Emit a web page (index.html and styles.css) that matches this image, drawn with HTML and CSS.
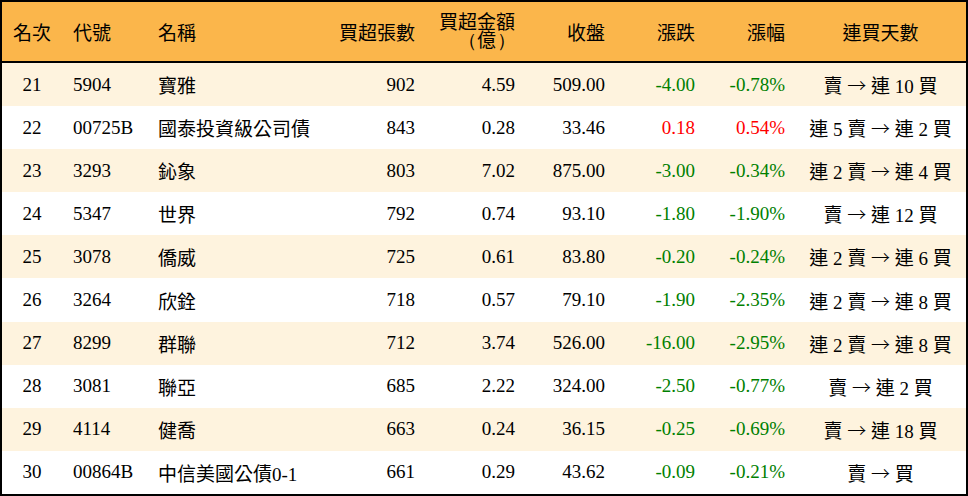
FILE: index.html
```html
<!DOCTYPE html>
<html lang="zh-Hant">
<head>
<meta charset="utf-8">
<title>買超排行</title>
<link rel="stylesheet" href="styles.css">
</head>
<body>
<div class="board">
  <div class="row head">
    <div class="c center">名次</div>
    <div class="c left code">代號</div>
    <div class="c left">名稱</div>
    <div class="c right">買超張數</div>
    <div class="c right two"><span class="ln">買超金額</span><span class="ln"><span class="paren pl">（</span>億<span class="paren pr">）</span></span></div>
    <div class="c right">收盤</div>
    <div class="c right">漲跌</div>
    <div class="c right">漲幅</div>
    <div class="c center">連買天數</div>
  </div>

  <div class="row odd">
    <div class="c center">21</div><div class="c left code">5904</div><div class="c left">寶雅</div>
    <div class="c right">902</div><div class="c right">4.59</div><div class="c right">509.00</div>
    <div class="c right down">-4.00</div><div class="c right down">-0.78%</div><div class="c center">賣 <span class="arr">→</span> 連 10 買</div>
  </div>
  <div class="row">
    <div class="c center">22</div><div class="c left code">00725B</div><div class="c left">國泰投資級公司債</div>
    <div class="c right">843</div><div class="c right">0.28</div><div class="c right">33.46</div>
    <div class="c right up">0.18</div><div class="c right up">0.54%</div><div class="c center">連 5 賣 <span class="arr">→</span> 連 2 買</div>
  </div>
  <div class="row odd">
    <div class="c center">23</div><div class="c left code">3293</div><div class="c left">鈊象</div>
    <div class="c right">803</div><div class="c right">7.02</div><div class="c right">875.00</div>
    <div class="c right down">-3.00</div><div class="c right down">-0.34%</div><div class="c center">連 2 賣 <span class="arr">→</span> 連 4 買</div>
  </div>
  <div class="row">
    <div class="c center">24</div><div class="c left code">5347</div><div class="c left">世界</div>
    <div class="c right">792</div><div class="c right">0.74</div><div class="c right">93.10</div>
    <div class="c right down">-1.80</div><div class="c right down">-1.90%</div><div class="c center">賣 <span class="arr">→</span> 連 12 買</div>
  </div>
  <div class="row odd">
    <div class="c center">25</div><div class="c left code">3078</div><div class="c left">僑威</div>
    <div class="c right">725</div><div class="c right">0.61</div><div class="c right">83.80</div>
    <div class="c right down">-0.20</div><div class="c right down">-0.24%</div><div class="c center">連 2 賣 <span class="arr">→</span> 連 6 買</div>
  </div>
  <div class="row">
    <div class="c center">26</div><div class="c left code">3264</div><div class="c left">欣銓</div>
    <div class="c right">718</div><div class="c right">0.57</div><div class="c right">79.10</div>
    <div class="c right down">-1.90</div><div class="c right down">-2.35%</div><div class="c center">連 2 賣 <span class="arr">→</span> 連 8 買</div>
  </div>
  <div class="row odd">
    <div class="c center">27</div><div class="c left code">8299</div><div class="c left">群聯</div>
    <div class="c right">712</div><div class="c right">3.74</div><div class="c right">526.00</div>
    <div class="c right down">-16.00</div><div class="c right down">-2.95%</div><div class="c center">連 2 賣 <span class="arr">→</span> 連 8 買</div>
  </div>
  <div class="row">
    <div class="c center">28</div><div class="c left code">3081</div><div class="c left">聯亞</div>
    <div class="c right">685</div><div class="c right">2.22</div><div class="c right">324.00</div>
    <div class="c right down">-2.50</div><div class="c right down">-0.77%</div><div class="c center">賣 <span class="arr">→</span> 連 2 買</div>
  </div>
  <div class="row odd">
    <div class="c center">29</div><div class="c left code">4114</div><div class="c left">健喬</div>
    <div class="c right">663</div><div class="c right">0.24</div><div class="c right">36.15</div>
    <div class="c right down">-0.25</div><div class="c right down">-0.69%</div><div class="c center">賣 <span class="arr">→</span> 連 18 買</div>
  </div>
  <div class="row">
    <div class="c center">30</div><div class="c left code">00864B</div><div class="c left">中信美國公債0-1</div>
    <div class="c right">661</div><div class="c right">0.29</div><div class="c right">43.62</div>
    <div class="c right down">-0.09</div><div class="c right down">-0.21%</div><div class="c center">賣 <span class="arr">→</span> 買</div>
  </div>
</div>
</body>
</html>
```

FILE: styles.css
```css
html, body {
  margin: 0;
  padding: 0;
  background: #ffffff;
}

.board {
  box-sizing: border-box;
  width: 968px;
  height: 496px;
  border: 2px solid #000000;
  background: #ffffff;
  font-family: "Liberation Serif", "Noto Sans CJK TC", serif;
  font-size: 19px;
  color: #000000;
  display: flex;
  flex-direction: column;
}

.row {
  display: grid;
  grid-template-columns: 60px 86px 177px 100px 100px 90px 90px 90px 171px;
  height: 43.1px;
  align-items: center;
  background: #ffffff;
}

.row.odd {
  background: #fef3de;
}

.row.head {
  height: 59px;
  background: #fbb64b;
  border-bottom: 2px solid #000000;
  flex: none;
}

.c {
  padding: 0 10px;
  white-space: nowrap;
}

.center {
  text-align: center;
  padding: 0;
}

.left {
  text-align: left;
}

.code {
  padding-left: 11px;
}

.right {
  text-align: right;
}

.two {
  display: flex;
  flex-direction: column;
  align-items: flex-end;
  gap: 0;
  padding-top: 1px;
}

.ln {
  display: block;
  line-height: 18px;
  height: 18px;
}

.paren {
  display: inline-block;
  width: 19px;
  font-family: "Liberation Serif", serif;
}

.pl {
  text-align: right;
  padding-right: 1px;
  box-sizing: border-box;
}

.pr {
  text-align: left;
  padding-left: 1px;
  box-sizing: border-box;
}

.arr {
  font-family: "Noto Sans CJK TC", "DejaVu Sans", sans-serif;
  font-weight: 300;
}

.down {
  color: #008000;
}

.up {
  color: #ff0000;
}
```
